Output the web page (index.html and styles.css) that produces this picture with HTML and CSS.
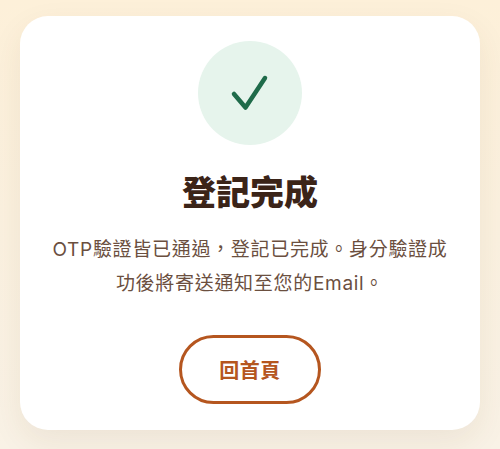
FILE: index.html
```html
<!DOCTYPE html>
<html lang="zh-Hant">

<head>
    <meta charset="UTF-8">
    <meta name="viewport" content="width=device-width, initial-scale=1.0">
    <title>登記完成</title>
    <link rel="stylesheet" href="styles.css">
</head>

<body>
    <div class="card">
        <div class="check-circle">
            <svg width="40" height="40" viewBox="0 0 40 40" fill="none">
                <path d="M4 21 L15.5 34.5 L35 5" stroke="#1f6b4a" stroke-width="4.5" stroke-linecap="round" stroke-linejoin="round" />
            </svg>
        </div>
        <h1>登記完成</h1>
        <p>OTP驗證皆已通過，登記已完成。身分驗證成功後將寄送通知至您的Email。</p>
        <a class="home-btn" href="#">回首頁</a>
    </div>
</body>

</html>
```

FILE: styles.css
```css
* {
    box-sizing: border-box;
}

body {
    margin: 0;
    height: 449px;
    overflow: hidden;
    padding: 16px 20px 0;
    font-family: Inter, "Noto Sans CJK TC", sans-serif;
    background: linear-gradient(180deg, #fdf0d9 0%, #f9f2e6 100%);
}

.card {
    height: 414px;
    padding: 25px 28px 0;
    display: flex;
    flex-direction: column;
    align-items: center;
    background: #fff;
    border-radius: 28px;
    box-shadow: 0 12px 32px rgba(90, 60, 30, 0.08);
}

.check-circle {
    flex-shrink: 0;
    width: 104px;
    height: 104px;
    display: flex;
    justify-content: center;
    align-items: center;
    border-radius: 50%;
    background: #e6f4ec;
}

h1 {
    margin: 24px 0 0;
    font-size: 34px;
    line-height: 48px;
    font-weight: 900;
    color: #3b2418;
}

p {
    margin: 16px 0 0;
    font-size: 19px;
    line-height: 34px;
    letter-spacing: 0.7px;
    text-align: center;
    color: #6b4f3f;
}

.home-btn {
    flex-shrink: 0;
    margin-top: 34px;
    width: 142px;
    height: 69px;
    display: flex;
    justify-content: center;
    align-items: center;
    border: 3px solid #b5561f;
    border-radius: 35px;
    font-size: 20px;
    font-weight: 700;
    letter-spacing: 0.5px;
    color: #b5561f;
    text-decoration: none;
}
```
